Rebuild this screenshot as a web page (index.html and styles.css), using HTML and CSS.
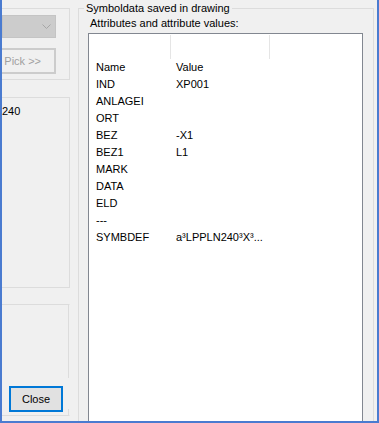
FILE: index.html
```html
<!DOCTYPE html>
<html>
<head>
<meta charset="utf-8">
<link rel="stylesheet" href="styles.css">
</head>
<body>
<div class="window">
  <div class="left-col">
    <div class="group g1">
      <div class="combo"><svg class="chev" width="9" height="5" viewBox="0 0 9 5"><path d="M0.5 0.5 L4.5 4.5 L8.5 0.5" fill="none" stroke="#a6a6a6" stroke-width="1"/></svg></div>
      <div class="btn-pick">Pick &gt;&gt;</div>
    </div>
    <div class="group g2">
      <div class="cut-text">240</div>
    </div>
    <div class="group g3">
      <div class="btn-close">Close</div>
    </div>
  </div>
  <fieldset class="symbox">
    <legend>Symboldata saved in drawing</legend>
    <div class="attr-label">Attributes and attribute values:</div>
    <div class="listbox">
      <div class="lb-header">
        <div class="h-col h1"></div>
        <div class="h-col h2"></div>
      </div>
      <div class="row"><span class="c-name">Name</span><span class="c-val">Value</span></div>
      <div class="row"><span class="c-name">IND</span><span class="c-val">XP001</span></div>
      <div class="row"><span class="c-name">ANLAGEI</span><span class="c-val"></span></div>
      <div class="row"><span class="c-name">ORT</span><span class="c-val"></span></div>
      <div class="row"><span class="c-name">BEZ</span><span class="c-val">-X1</span></div>
      <div class="row"><span class="c-name">BEZ1</span><span class="c-val">L1</span></div>
      <div class="row"><span class="c-name">MARK</span><span class="c-val"></span></div>
      <div class="row"><span class="c-name">DATA</span><span class="c-val"></span></div>
      <div class="row"><span class="c-name">ELD</span><span class="c-val"></span></div>
      <div class="row"><span class="c-name">---</span><span class="c-val"></span></div>
      <div class="row"><span class="c-name">SYMBDEF</span><span class="c-val">a³LPPLN240³X³...</span></div>
    </div>
  </fieldset>
</div>
</body>
</html>
```
FILE: styles.css
```css
* { box-sizing: border-box; }
html, body {
  margin: 0;
  padding: 0;
}
body {
  width: 379px;
  height: 423px;
  overflow: hidden;
  background: #f0f0f0;
  font-family: "Liberation Sans", Arial, sans-serif;
  font-size: 11px;
  color: #000;
}
.window {
  width: 379px;
  height: 423px;
  border-left: 2px solid #4a7bd0;
  border-right: 2px solid #4a7bd0;
  border-bottom: 2px solid #4a7bd0;
  display: flex;
  overflow: hidden;
  padding-right: 3px;
}
.left-col {
  width: 76px;
  flex: none;
  padding-top: 8px;
  display: flex;
  flex-direction: column;
  overflow: hidden;
}
.group {
  width: 68px;
  border-top: 1px solid #dcdcdc;
  border-right: 1px solid #dcdcdc;
  border-bottom: 1px solid #dcdcdc;
  position: relative;
}
.g1 {
  height: 72px;
  padding-top: 6px;
  display: flex;
  flex-direction: column;
  gap: 10px;
}
.combo {
  width: 54px;
  height: 23px;
  background: #cccccc;
  border: 1px solid #c4c4c4;
  display: flex;
  align-items: center;
  justify-content: flex-end;
  padding-right: 4px;
}
.chev { display: block; }
.btn-pick {
  width: 54px;
  height: 26px;
  border: 2px solid #cccccc;
  border-left: none;
  background: #f0f0f0;
  color: #a0a0a0;
  display: flex;
  align-items: center;
  justify-content: flex-end;
  padding-right: 13px;
  white-space: nowrap;
}
.g2 {
  margin-top: 17px;
  height: 191px;
  padding-top: 7px;
}
.cut-text {
  margin-left: 0;
  line-height: 13px;
}
.g3 {
  margin-top: 16px;
  height: 112px;
  border-right-color: transparent;
  background: linear-gradient(#dcdcdc, #dcdcdc) right 0 top 0 / 1px 73px no-repeat,
              linear-gradient(#dcdcdc, #dcdcdc) right 0 bottom 0 / 1px 6px no-repeat;
  display: flex;
  flex-direction: column;
  justify-content: flex-end;
  padding-bottom: 3px;
  padding-left: 7px;
}
.btn-close {
  width: 54px;
  height: 26px;
  border: 2px solid #0078d7;
  background: #e1e1e1;
  display: flex;
  align-items: center;
  justify-content: center;
  padding-bottom: 1px;
}
.symbox {
  width: 296px;
  flex: none;
  margin: 0;
  margin-top: 2px;
  padding: 0;
  min-width: 0;
  border: 1px solid #dcdcdc;
  height: 500px;
}
.symbox legend {
  margin-left: 5px;
  padding: 0 2px;
  line-height: 13px;
}
.attr-label {
  margin-left: 11px;
  margin-top: 2px;
  line-height: 13px;
}
.listbox {
  margin-left: 9px;
  margin-top: 3px;
  width: 275px;
  height: 450px;
  background: #fff;
  border: 1px solid #828790;
}
.lb-header {
  height: 25px;
  display: flex;
  padding-top: 1px;
}
.h-col { height: 24px; border-right: 1px solid #e5e5e5; }
.h1 { width: 82px; }
.h2 { width: 99px; }
.row {
  height: 17px;
  line-height: 17px;
  display: flex;
  white-space: nowrap;
}
.c-name { width: 87px; padding-left: 7px; flex: none; }
.c-val { flex: 1; }
```
